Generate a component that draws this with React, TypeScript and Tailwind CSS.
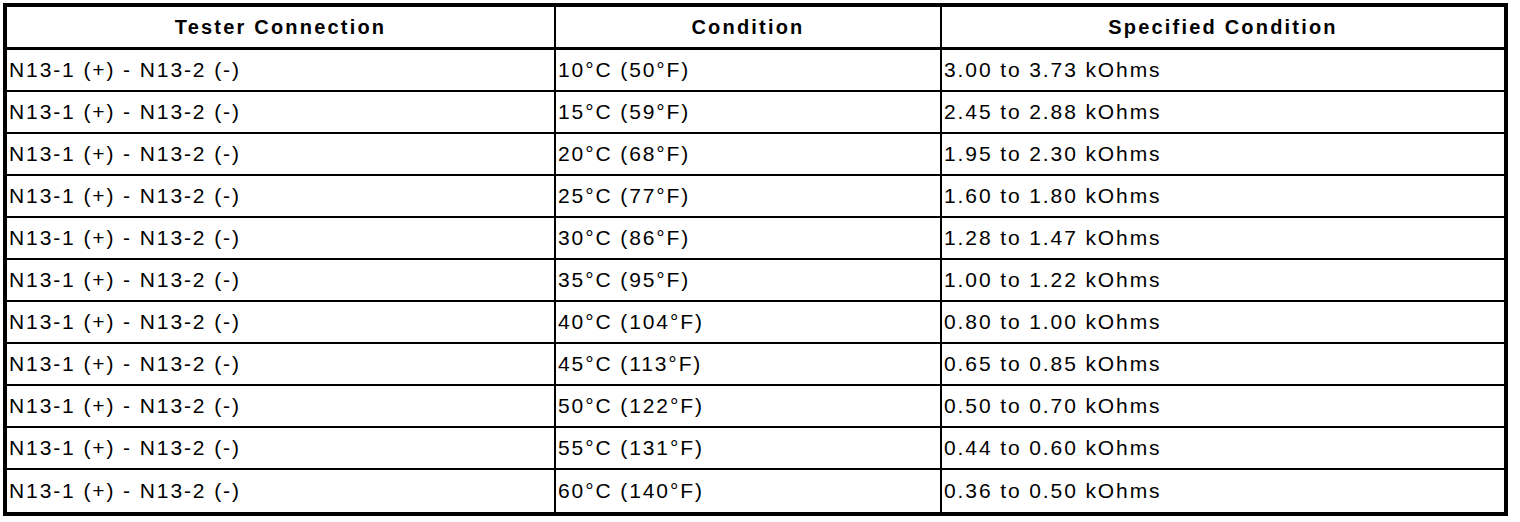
const rows = [
  ["10°C (50°F)", "3.00 to 3.73 kOhms"],
  ["15°C (59°F)", "2.45 to 2.88 kOhms"],
  ["20°C (68°F)", "1.95 to 2.30 kOhms"],
  ["25°C (77°F)", "1.60 to 1.80 kOhms"],
  ["30°C (86°F)", "1.28 to 1.47 kOhms"],
  ["35°C (95°F)", "1.00 to 1.22 kOhms"],
  ["40°C (104°F)", "0.80 to 1.00 kOhms"],
  ["45°C (113°F)", "0.65 to 0.85 kOhms"],
  ["50°C (122°F)", "0.50 to 0.70 kOhms"],
  ["55°C (131°F)", "0.44 to 0.60 kOhms"],
  ["60°C (140°F)", "0.36 to 0.50 kOhms"],
]

export default function App() {
  return (
    <div className="w-[1520px] h-[522px] bg-white pt-[3px] pl-[3px] font-['Liberation_Sans',Arial,sans-serif] text-black">
      <div className="w-[1505px] border-4 border-black">
        <div className="flex h-[43px] border-b-[3px] border-black font-bold text-[20px] tracking-[2.2px]">
          <div className="w-[547px] flex items-center justify-center">Tester Connection</div>
          <div className="w-[386px] border-l-2 border-black flex items-center justify-center">Condition</div>
          <div className="flex-1 border-l-2 border-black flex items-center justify-center">Specified Condition</div>
        </div>
        {rows.map(([cond, spec], i) => (
          <div
            key={i}
            className={`flex h-[42px] text-[21px] tracking-[1.9px] ${i < rows.length - 1 ? "border-b-2 border-black" : ""}`}
          >
            <div className="w-[547px] flex items-center pl-[2px]">N13-1 (+) - N13-2 (-)</div>
            <div className="w-[386px] border-l-2 border-black flex items-center pl-[2px]">{cond}</div>
            <div className="flex-1 border-l-2 border-black flex items-center pl-[2px]">{spec}</div>
          </div>
        ))}
      </div>
    </div>
  )
}
